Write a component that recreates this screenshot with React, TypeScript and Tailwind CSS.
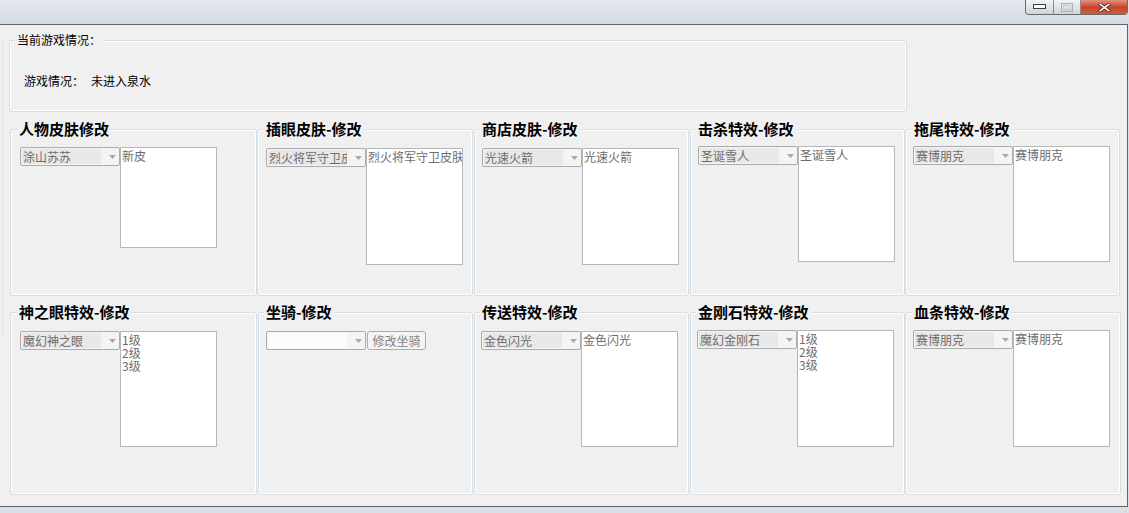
import React from "react";

type PanelProps = {
  title: string;
  className: string;
  titleMl: string;
  bodyClass: string;
  children: React.ReactNode;
};

function Panel({ title, className, titleMl, bodyClass, children }: PanelProps) {
  return (
    <div
      className={`flex shrink-0 flex-col rounded-[3px] border border-[#d5dfe5] shadow-[inset_0_0_0_1px_#ffffff] ${className}`}
    >
      <div
        className={`-mt-[10px] w-fit bg-[#f0f0f0] px-[2px] text-[15px] font-bold leading-[18px] text-black ${titleMl}`}
      >
        {title}
      </div>
      <div className={`flex items-start ${bodyClass}`}>{children}</div>
    </div>
  );
}

function Combo({ text, empty }: { text?: string; empty?: boolean }) {
  return (
    <div className="flex h-[19px] w-[100px] shrink-0 items-center rounded-[2px] border border-[#acacac] bg-[#f4f4f4]">
      <div
        className={`ml-px h-[15px] w-[79px] overflow-x-clip whitespace-nowrap pl-px text-[12px] leading-[15px] text-[#6d6d6d] ${
          empty ? "bg-[#fbfbfb]" : "bg-[#e8e8e8]"
        }`}
      >
        {text}
      </div>
      <svg className="ml-[8px]" width="7" height="4" viewBox="0 0 7 4">
        <path d="M0 0h7L3.5 4z" fill="#a9a9a9" />
      </svg>
    </div>
  );
}

function List({ items, h }: { items: string[]; h: string }) {
  return (
    <div
      className={`w-[97px] shrink-0 overflow-hidden whitespace-nowrap border border-[#b7b7b7] bg-white pl-px pt-px text-[12px] leading-[13px] text-[#6d6d6d] ${h}`}
    >
      {items.map((it) => (
        <div key={it}>{it}</div>
      ))}
    </div>
  );
}

export default function App() {
  return (
    <div className="flex h-[513px] w-[1129px] flex-col overflow-hidden bg-[#dae0e7] font-['Noto_Sans_CJK_SC','Noto_Sans',sans-serif]">
      {/* title bar */}
      <div className="flex h-[24px] shrink-0 items-start justify-end bg-linear-to-b from-[#e2e7ed] to-[#d5dce4]">
        <div className="mr-px flex h-[15px] overflow-hidden rounded-b-[4px] border border-t-0 border-[#6a6a6a]">
          <div className="flex w-[28px] items-end justify-center border-r border-[#8a8a8a] bg-linear-to-b from-[#f1f4f8] to-[#cdd4dc] pb-[5px]">
            <svg width="13" height="5" viewBox="0 0 13 5">
              <rect x="0.5" y="0.5" width="12" height="4" fill="#ffffff" stroke="#3c3c3c" />
            </svg>
          </div>
          <div className="flex w-[27px] items-center justify-center border-r border-[#8a8a8a] bg-linear-to-b from-[#f1f4f8] to-[#cdd4dc]">
            <svg width="12" height="9" viewBox="0 0 12 9">
              <rect x="0.5" y="0.5" width="11" height="8" fill="none" stroke="#a9aeb4" />
              <rect x="2.5" y="2.5" width="7" height="4" fill="none" stroke="#c3c8ce" />
            </svg>
          </div>
          <div className="flex w-[46px] items-center justify-center bg-linear-to-b from-[#e3917c] via-[#c8442c] to-[#cf5a3f]">
            <svg width="13" height="9" viewBox="0 0 13 9">
              <path d="M1 0.5L6.5 4.5L12 0.5M1 8.5L6.5 4.5L12 8.5" stroke="#4a2018" strokeWidth="3.2" fill="none" />
              <path d="M1.5 0.8L6.5 4.5L11.5 0.8M1.5 8.2L6.5 4.5L11.5 8.2" stroke="#ffffff" strokeWidth="1.6" fill="none" />
            </svg>
          </div>
        </div>
      </div>

      {/* window body */}
      <div className="flex h-[483px] w-[1128px] shrink-0 border-t border-r border-b border-[#646464] bg-[#f0f0f0]">
        <div className="ml-[2px] mt-[15px] h-[300px] w-px shrink-0 bg-[#dfe5eb]" />
        <div className="ml-[6px] flex flex-col">
          {/* current game status */}
          <div className="mt-[15px] flex h-[72px] w-[898px] flex-col rounded-[3px] border border-[#d5dfe5] shadow-[inset_0_0_0_1px_#ffffff]">
            <div className="-mt-[9px] ml-[5px] w-fit bg-[#f0f0f0] px-[2px] text-[12px] leading-[16px] text-black">
              当前游戏情况：
            </div>
            <div className="ml-[14px] mt-[25px] flex text-[12px] leading-[16px] text-black">
              <span>游戏情况：</span>
              <span className="ml-[7px]">未进入泉水</span>
            </div>
          </div>

          {/* row 1 */}
          <div className="ml-px mt-[17px] flex h-[167px]">
            <Panel title="人物皮肤修改" className="h-[167px] w-[247px]" titleMl="ml-[6px]" bodyClass="ml-[9px] mt-[9px]">
              <Combo text="涂山苏苏" />
              <List items={["新皮"]} h="h-[101px]" />
            </Panel>
            <Panel title="插眼皮肤-修改" className="h-[167px] w-[216px]" titleMl="ml-[6px]" bodyClass="ml-[8px] mt-[10px]">
              <Combo text="烈火将军守卫皮肤" />
              <List items={["烈火将军守卫皮肤"]} h="h-[117px]" />
            </Panel>
            <Panel title="商店皮肤-修改" className="ml-px h-[167px] w-[215px]" titleMl="ml-[5px]" bodyClass="ml-[7px] mt-[10px]">
              <Combo text="光速火箭" />
              <List items={["光速火箭"]} h="h-[117px]" />
            </Panel>
            <Panel title="击杀特效-修改" className="ml-px h-[167px] w-[215px]" titleMl="ml-[5px]" bodyClass="ml-[7px] mt-[8px]">
              <Combo text="圣诞雪人" />
              <List items={["圣诞雪人"]} h="h-[116px]" />
            </Panel>
            <Panel title="拖尾特效-修改" className="h-[167px] w-[215px]" titleMl="ml-[6px]" bodyClass="ml-[7px] mt-[8px]">
              <Combo text="赛博朋克" />
              <List items={["赛博朋克"]} h="h-[116px]" />
            </Panel>
          </div>

          {/* row 2 */}
          <div className="ml-px mt-[16px] flex h-[183px]">
            <Panel title="神之眼特效-修改" className="h-[183px] w-[247px]" titleMl="ml-[6px]" bodyClass="ml-[9px] mt-[10px]">
              <Combo text="魔幻神之眼" />
              <List items={["1级", "2级", "3级"]} h="h-[116px]" />
            </Panel>
            <Panel title="坐骑-修改" className="ml-px h-[183px] w-[215px]" titleMl="ml-[5px]" bodyClass="ml-[7px] mt-[10px]">
              <Combo empty />
              <div className="ml-px flex h-[19px] w-[59px] shrink-0 items-center justify-center rounded-[3px] border border-[#acacac] bg-[#f4f4f4] text-[12px] leading-[15px] text-[#838383]">
                修改坐骑
              </div>
            </Panel>
            <Panel title="传送特效-修改" className="ml-px h-[183px] w-[215px]" titleMl="ml-[5px]" bodyClass="ml-[6px] mt-[10px]">
              <Combo text="金色闪光" />
              <List items={["金色闪光"]} h="h-[116px]" />
            </Panel>
            <Panel title="金刚石特效-修改" className="ml-px h-[183px] w-[215px]" titleMl="ml-[5px]" bodyClass="ml-[6px] mt-[9px]">
              <Combo text="魔幻金刚石" />
              <List items={["1级", "2级", "3级"]} h="h-[117px]" />
            </Panel>
            <Panel title="血条特效-修改" className="h-[183px] w-[216px]" titleMl="ml-[6px]" bodyClass="ml-[7px] mt-[9px]">
              <Combo text="赛博朋克" />
              <List items={["赛博朋克"]} h="h-[117px]" />
            </Panel>
          </div>
        </div>
      </div>
    </div>
  );
}
